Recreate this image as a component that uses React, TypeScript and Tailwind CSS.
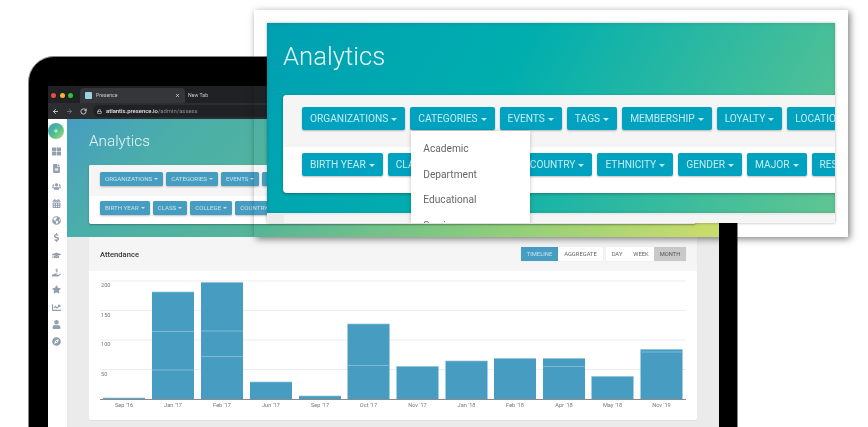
import { ArrowLeft, ArrowRight, Lock, Plus, RotateCw, X } from "lucide-react";
import {
  FaCalendarAlt,
  FaChartLine,
  FaCompass,
  FaDollarSign,
  FaFileAlt,
  FaGlobeAmericas,
  FaGraduationCap,
  FaHandHoldingUsd,
  FaStar,
  FaThLarge,
  FaUser,
  FaUsers,
} from "react-icons/fa";

const font = { fontFamily: "Roboto, 'Liberation Sans', sans-serif" };

const sideIcons = [
  FaThLarge,
  FaFileAlt,
  FaUsers,
  FaCalendarAlt,
  FaGlobeAmericas,
  FaDollarSign,
  FaGraduationCap,
  FaHandHoldingUsd,
  FaStar,
  FaChartLine,
  FaUser,
  FaCompass,
];

const bars = [
  { label: "Sep '16", x: 103, top: 398, lines: [] },
  { label: "Jan '17", x: 152, top: 292, lines: [331.5, 370] },
  { label: "Feb '17", x: 201, top: 282.5, lines: [331, 356.5] },
  { label: "Jun '17", x: 250, top: 382, lines: [] },
  { label: "Sep '17", x: 299, top: 396, lines: [] },
  { label: "Oct '17", x: 347.5, top: 324, lines: [365.5] },
  { label: "Nov '17", x: 396.5, top: 366.5, lines: [] },
  { label: "Jan '18", x: 445.5, top: 361, lines: [] },
  { label: "Feb '18", x: 494, top: 358.5, lines: [] },
  { label: "Apr '18", x: 543, top: 358.5, lines: [366.5] },
  { label: "May '18", x: 591.5, top: 376.5, lines: [] },
  { label: "Nov '19", x: 640.5, top: 349.5, lines: [352] },
];

const grid = [
  { y: 281, label: "200" },
  { y: 310.5, label: "150" },
  { y: 340, label: "100" },
  { y: 369.5, label: "50" },
];

const Caret = ({ size }: { size: number }) => (
  <span
    className="inline-block border-x-transparent border-t-current border-b-0"
    style={{ borderLeftWidth: size, borderRightWidth: size, borderTopWidth: size }}
  />
);

const SmallButton = ({ label }: { label: string }) => (
  <span className="flex h-[14px] shrink-0 items-center gap-[2px] rounded-[1.5px] bg-[#479dc1] px-[5px] pt-[0.5px] text-[6.15px] text-[#c5e3ee] shadow-[0_1px_2px_rgba(0,0,0,0.25)]">
    {label}
    <Caret size={2} />
  </span>
);

const BigButton = ({ label }: { label: string }) => (
  <span className="flex h-[23px] shrink-0 items-center gap-[3px] rounded-[2px] bg-[#00a2bf] px-[8px] pt-[1px] text-[10.2px] text-[#c4ecf2] shadow-[0_1px_2px_rgba(0,0,0,0.25)]">
    {label}
    <Caret size={3} />
  </span>
);

const Laptop = () => (
  <div className="absolute left-[28px] top-[56px] flex h-[400px] w-[710px] flex-col rounded-t-[26px] border border-[#8a8a8a] bg-black pl-[19px] pr-[18px] pt-[29px] blur-[0.5px]">
    {/* browser chrome */}
    <div className="flex h-[17px] items-end bg-[#202124] text-[5.2px] text-[#c9cacc]">
      <div className="mb-[5.5px] ml-[3px] flex gap-[3.5px]">
        <span className="h-[5px] w-[5px] rounded-full bg-[#ed4c46]" />
        <span className="h-[5px] w-[5px] rounded-full bg-[#f5b52e]" />
        <span className="h-[5px] w-[5px] rounded-full bg-[#33c23f]" />
      </div>
      <div className="ml-[7px] flex h-[15px] w-[105px] items-center rounded-t-[4px] bg-[#35363a] pl-[5px] pr-[5px]">
        <span className="h-[7px] w-[7px] rounded-[1px] bg-[#9fd0e4]" />
        <span className="ml-[4px]">Presence</span>
        <X className="ml-auto h-[5px] w-[5px] text-[#e8e8e8]" strokeWidth={3} />
      </div>
      <span className="mb-[3px] ml-[3px]">New Tab</span>
    </div>
    <div className="flex h-[16px] items-center bg-[#2c2d30] pl-[4px]">
      <ArrowLeft className="h-[7px] w-[7px] text-[#d5d5d5]" strokeWidth={3} />
      <ArrowRight className="ml-[7px] h-[7px] w-[7px] text-[#77787b]" strokeWidth={3} />
      <RotateCw className="ml-[7px] h-[7px] w-[7px] text-[#d5d5d5]" strokeWidth={3} />
      <div className="ml-[6px] flex h-[12px] w-[400px] items-center rounded-full bg-[#202124] pl-[4px] text-[5.9px]">
        <Lock className="h-[5px] w-[5px] text-[#d5d5d5]" strokeWidth={3} />
        <span className="ml-[4px] font-medium text-[#e4e4e4]">atlantis.presence.io</span>
        <span className="text-[#8d8e91]">/admin/assess</span>
      </div>
    </div>

    <div className="flex flex-1">
      {/* sidebar */}
      <div className="flex w-[19px] shrink-0 flex-col items-center bg-white pr-[3px] pt-[4px]">
        <span className="flex h-[16px] w-[16px] shrink-0 items-center justify-center rounded-full bg-[linear-gradient(135deg,#3f9fc4,#4fbf8f_55%,#b8dc6e)]">
          <Plus className="h-[6px] w-[6px] text-white" strokeWidth={3} />
        </span>
        <div className="mt-[8px] flex flex-col items-center gap-[8.3px] text-[#949fae]">
          {sideIcons.map((Icon, i) => (
            <Icon key={i} className="h-[9px] w-[9px]" />
          ))}
        </div>
      </div>

      {/* page */}
      <div className="flex-1 bg-[#ebebeb]">
        <div className="h-[118px] bg-[linear-gradient(135deg,#479dc1,#4aaeaa_15%,#55b598_39%,#8fce7a_71%,#cddd6a)] pl-[22px] pt-[11px]">
          <h1 className="text-[15.3px] font-light leading-[23px] text-[#e9f6f6]">Analytics</h1>
          <div className="mt-[12px] w-[607px] overflow-hidden rounded-[2px] bg-white shadow-[0_1px_2px_rgba(0,0,0,0.3)]">
            <div className="flex h-[31px] gap-[3px] bg-[#f5f5f5] pl-[11px] pt-[7px]">
              <SmallButton label="ORGANIZATIONS" />
              <SmallButton label="CATEGORIES" />
              <SmallButton label="EVENTS" />
              <SmallButton label="TAGS" />
            </div>
            <div className="flex h-[28px] gap-[3px] pl-[11px] pt-[5px]">
              <SmallButton label="BIRTH YEAR" />
              <SmallButton label="CLASS" />
              <SmallButton label="COLLEGE" />
              <SmallButton label="COUNTRY" />
            </div>
          </div>
        </div>

        <div className="ml-[22px] w-[608px] overflow-hidden rounded-b-[2px] bg-white shadow-[0_1px_1px_rgba(0,0,0,0.06)]">
          <div className="flex h-[34px] items-center justify-between bg-[#f5f5f5] pl-[11px] pr-[11px]">
            <span className="pt-[1px] text-[7.6px] font-medium text-[#333]">Attendance</span>
            <div className="flex gap-[3px] text-[5.8px] text-[#666]">
              <div className="flex h-[14px] items-center rounded-[1px] bg-white shadow-[0_0_1px_rgba(0,0,0,0.2)]">
                <span className="flex h-full w-[37px] items-center justify-center bg-[#479dc1] text-[#c5e3ee]">TIMELINE</span>
                <span className="flex h-full w-[45px] items-center justify-center">AGGREGATE</span>
              </div>
              <div className="flex h-[14px] items-center rounded-[1px] bg-white shadow-[0_0_1px_rgba(0,0,0,0.2)]">
                <span className="flex h-full w-[22px] items-center justify-center">DAY</span>
                <span className="flex h-full w-[26px] items-center justify-center">WEEK</span>
                <span className="flex h-full w-[32px] items-center justify-center bg-[#c9c9c9] text-[#555]">MONTH</span>
              </div>
            </div>
          </div>
          <svg viewBox="89 271 608 149" className="block h-[149px] w-[608px]">
            {grid.map((g) => (
              <g key={g.y}>
                <line x1={100} x2={686} y1={g.y} y2={g.y} stroke="#ececec" strokeWidth={1} />
                <text x={101} y={g.y + 6.3} fontSize={5.6} fill="#777">
                  {g.label}
                </text>
              </g>
            ))}
            {bars.map((b) => (
              <g key={b.label}>
                <rect x={b.x} y={b.top} width={42} height={399 - b.top} fill="#479dc1" />
                <line x1={b.x} x2={b.x + 42} y1={b.top} y2={b.top} stroke="#8cc3da" strokeWidth={0.7} />
                {b.lines.map((y) => (
                  <line key={y} x1={b.x} x2={b.x + 42} y1={y} y2={y} stroke="#7fbad4" strokeWidth={1} />
                ))}
                <text x={b.x + 21} y={407} fontSize={5.6} fill="#777" textAnchor="middle">
                  {b.label}
                </text>
              </g>
            ))}
            <line x1={100} x2={686} y1={399.5} y2={399.5} stroke="#8a8a8a" strokeWidth={1} />
          </svg>
        </div>
      </div>
    </div>
  </div>
);

const Overlay = () => (
  <div className="absolute left-[254px] top-[10px] h-[227px] w-[594px] p-[13px] shadow-[2px_2px_7px_rgba(0,0,0,0.5)]">
    <div className="h-[200px] w-[568px] overflow-hidden bg-[#ebebeb] shadow-[0_0_3px_rgba(0,0,0,0.3)] blur-[0.35px]">
      <div className="h-[190px] bg-[linear-gradient(120deg,#00a0b2,#00aeae_40%,#62c591)] pl-[16px] pt-[16px] shadow-[inset_0_0_4px_rgba(0,0,0,0.12)]">
        <h1 className="text-[25.7px] font-light leading-[34px] text-[#e8f8f8]">Analytics</h1>
        <div className="mt-[22px] w-[600px] rounded-l-[4px] bg-white shadow-[0_1px_3px_rgba(0,0,0,0.3)]">
          <div className="flex h-[52px] gap-[5px] rounded-tl-[4px] bg-[#f5f5f5] pl-[19px] pt-[12px]">
            <BigButton label="ORGANIZATIONS" />
            <div className="relative">
              <BigButton label="CATEGORIES" />
              <div className="absolute left-[1px] top-[24px] z-10 h-[110px] w-[119px] bg-white pl-[12px] pt-[5px] text-[10.2px] leading-[25.5px] text-[#666] shadow-[0_1px_4px_rgba(0,0,0,0.25)]">
                <div>Academic</div>
                <div>Department</div>
                <div>Educational</div>
                <div>Service</div>
              </div>
            </div>
            <BigButton label="EVENTS" />
            <BigButton label="TAGS" />
            <BigButton label="MEMBERSHIP" />
            <BigButton label="LOYALTY" />
            <BigButton label="LOCATION" />
          </div>
          <div className="flex h-[46px] gap-[5px] pl-[19px] pt-[6px]">
            <BigButton label="BIRTH YEAR" />
            <BigButton label="CLASS" />
            <BigButton label="COLLEGE" />
            <BigButton label="COUNTRY" />
            <BigButton label="ETHNICITY" />
            <BigButton label="GENDER" />
            <BigButton label="MAJOR" />
            <BigButton label="RESIDENCE" />
          </div>
        </div>
      </div>
      <div className="ml-[17px] mt-[2px] h-[8px] bg-[#f5f5f5]" />
    </div>
  </div>
);

export default function App() {
  return (
    <div className="relative h-[427px] w-[868px] overflow-hidden bg-white" style={font}>
      <Laptop />
      <Overlay />
    </div>
  );
}
